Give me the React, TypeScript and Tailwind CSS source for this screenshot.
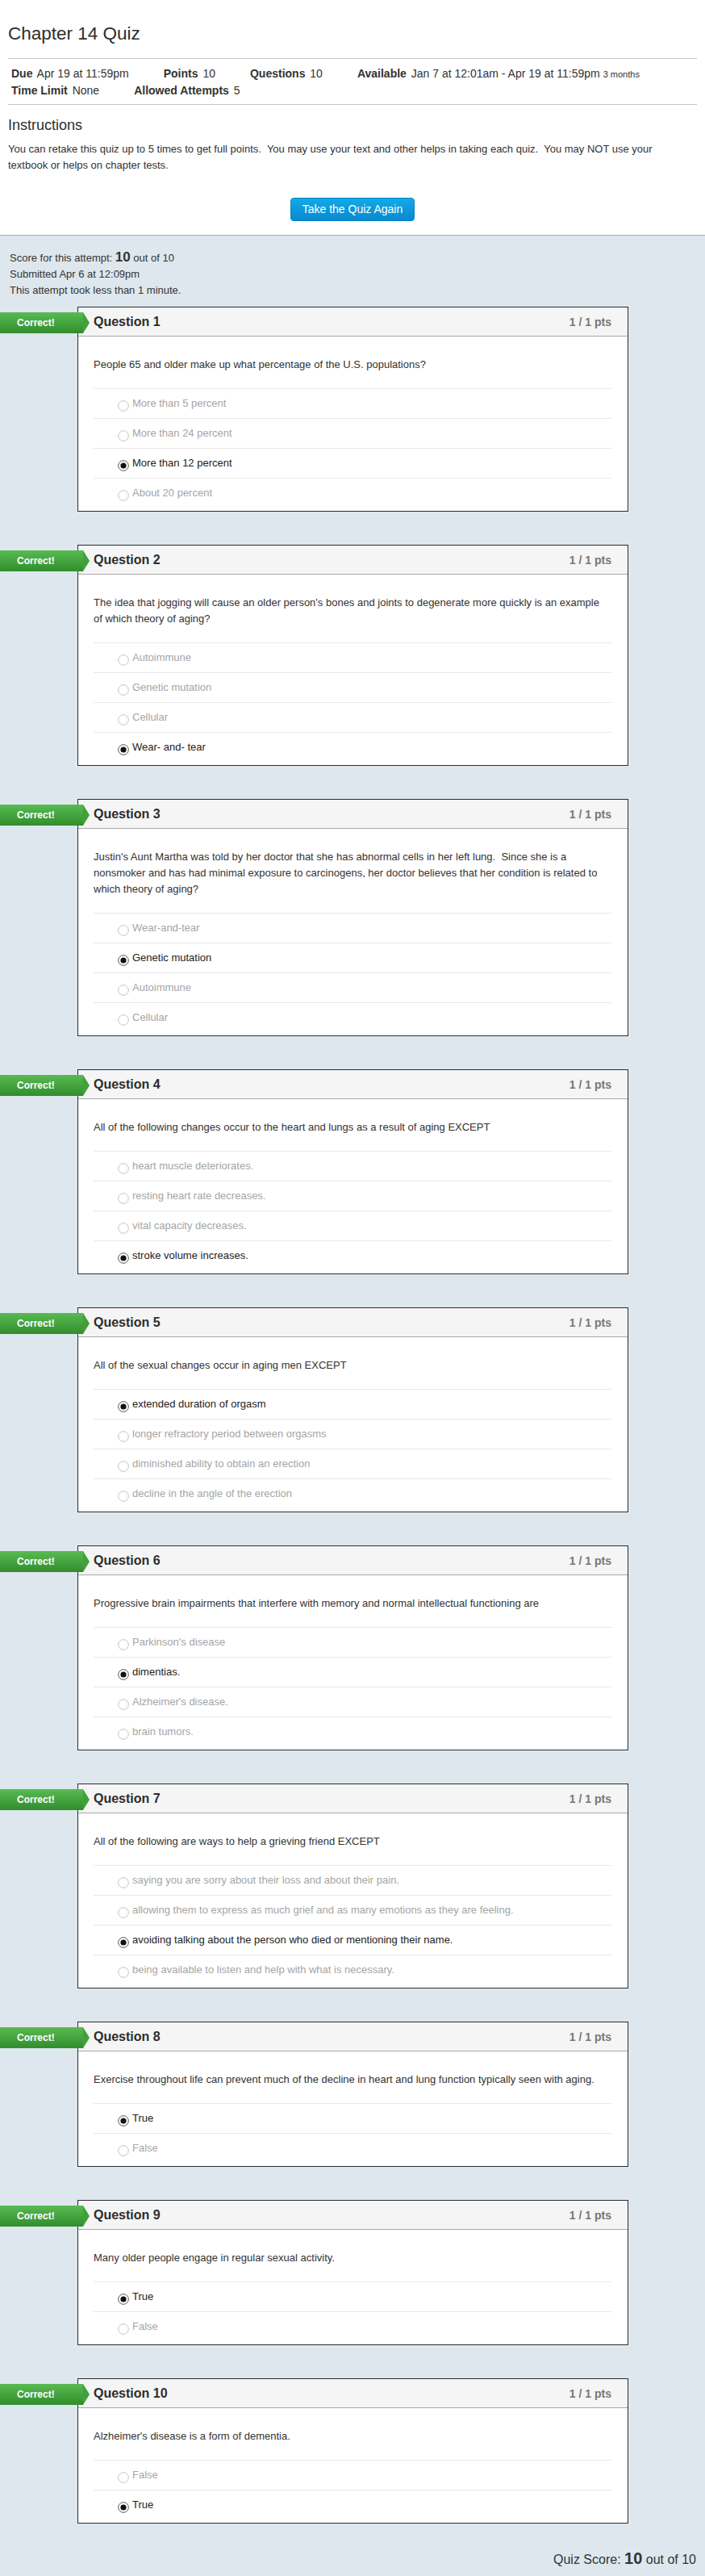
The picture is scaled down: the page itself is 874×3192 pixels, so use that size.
import React from "react"

type Question = {
  n: number
  text: string
  answers: string[]
  selected: number
}

const questions: Question[] = [
  {
    n: 1,
    text: "People 65 and older make up what percentage of the U.S. populations?",
    answers: ["More than 5 percent", "More than 24 percent", "More than 12 percent", "About 20 percent"],
    selected: 2,
  },
  {
    n: 2,
    text: "The idea that jogging will cause an older person's bones and joints to degenerate more quickly is an example of\u00a0which theory of aging?",
    answers: ["Autoimmune", "Genetic mutation", "Cellular", "Wear- and- tear"],
    selected: 3,
  },
  {
    n: 3,
    text: "Justin's Aunt Martha was told by her doctor that she has abnormal cells in her left lung.\u00a0 Since she is a nonsmoker and has had minimal exposure to carcinogens, her doctor believes that her condition is related to which theory of aging?",
    answers: ["Wear-and-tear", "Genetic mutation", "Autoimmune", "Cellular"],
    selected: 1,
  },
  {
    n: 4,
    text: "All of the following changes occur to the heart and lungs as a result of aging EXCEPT",
    answers: ["heart muscle deteriorates.", "resting heart rate decreases.", "vital capacity decreases.", "stroke volume increases."],
    selected: 3,
  },
  {
    n: 5,
    text: "All of the sexual changes occur in aging men EXCEPT",
    answers: [
      "extended duration of orgasm",
      "longer refractory period between orgasms",
      "diminished ability to obtain an erection",
      "decline in the angle of the erection",
    ],
    selected: 0,
  },
  {
    n: 6,
    text: "Progressive brain impairments that interfere with memory and normal intellectual functioning are",
    answers: ["Parkinson's disease", "dimentias.", "Alzheimer's disease.", "brain tumors."],
    selected: 1,
  },
  {
    n: 7,
    text: "All of the following are ways to help a grieving friend EXCEPT",
    answers: [
      "saying you are sorry about their loss and about their pain.",
      "allowing them to express as much grief and as many emotions as they are feeling.",
      "avoiding talking about the person who died or mentioning their name.",
      "being available to listen and help with what is necessary.",
    ],
    selected: 2,
  },
  {
    n: 8,
    text: "Exercise throughout life can prevent much of the decline in heart and lung function typically seen with aging.",
    answers: ["True", "False"],
    selected: 0,
  },
  {
    n: 9,
    text: "Many older people engage in regular sexual activity.",
    answers: ["True", "False"],
    selected: 0,
  },
  {
    n: 10,
    text: "Alzheimer's disease is a form of dementia.",
    answers: ["False", "True"],
    selected: 1,
  },
]

const Radio = ({ checked }: { checked: boolean }) => (
  <svg width="14" height="14" viewBox="0 0 14 14" className="shrink-0 mt-[5px]">
    <circle cx="7" cy="7" r="6.3" fill="#fff" stroke={checked ? "#555" : "#c4c4c4"} strokeWidth="1" />
    {checked && <circle cx="7" cy="7" r="3.6" fill="#111" />}
  </svg>
)

const QuestionCard = ({ q }: { q: Question }) => (
  <div className="relative ml-[96px] w-[683px] border border-[#2d2d2d] bg-white">
    {/* correct badge */}
    <div className="absolute left-[-97px] top-[6px] flex h-[26px] items-center">
      <div className="flex h-[26px] w-[103px] items-center bg-gradient-to-b from-[#58bb51] to-[#318d2d] pl-[21px] text-[12px] font-bold text-white">
        Correct!
      </div>
      <div className="h-0 w-0 border-y-[13px] border-l-[8px] border-y-transparent border-l-[#40a13b]" />
    </div>

    <div className="flex h-[36px] items-center justify-between border-b border-[#a8a8a8] bg-[#f5f5f5] pl-[19px] pr-[20px]">
      <span className="text-[16px] font-bold text-[#2d2d2d]">Question {q.n}</span>
      <span className="mt-[2px] text-[14px] font-bold text-[#777]">1 / 1 pts</span>
    </div>

    <div className="pl-[19px] pr-[20px] pt-[25px] pb-[4px]">
      <p className="text-[13px] leading-[20px] text-[#333]">{q.text}</p>
      <div className="mt-[19px]">
        {q.answers.map((a, i) => (
          <div key={i} className="flex h-[37px] items-center gap-[4px] border-t border-[#e8e8e8] pl-[30px]">
            <Radio checked={i === q.selected} />
            <span className={`text-[13px] ${i === q.selected ? "text-[#222]" : "text-[#a5a5a5]"}`}>{a}</span>
          </div>
        ))}
      </div>
    </div>
  </div>
)

export default function App() {
  return (
    <div className="min-h-[3192px] bg-[#dee7ee] font-['Liberation_Sans',Arial,sans-serif] text-[#333]">
      <div className="border-b border-[#aaaaaa] bg-white px-[10px] pt-[28px] pb-[17px]">
        <h1 className="text-[22.5px] leading-[28px] font-normal text-[#2d2d2d]">Chapter 14 Quiz</h1>

        <div className="mt-[16px] border-y border-[#c4c4c4] pl-[4px] pt-[8px] pb-[7px]">
          <div className="flex flex-wrap gap-x-[43px] text-[14px] leading-[20px]">
            <span>
              <b className="mr-[2px]">Due</b> Apr 19 at 11:59pm
            </span>
            <span>
              <b className="mr-[2px]">Points</b> 10
            </span>
            <span>
              <b className="mr-[2px]">Questions</b> 10
            </span>
            <span>
              <b className="mr-[2px]">Available</b> Jan 7 at 12:01am - Apr 19 at 11:59pm{" "}
              <span className="text-[11px]">3 months</span>
            </span>
            <span>
              <b className="mr-[2px]">Time Limit</b> None
            </span>
            <span>
              <b className="mr-[2px]">Allowed Attempts</b> 5
            </span>
          </div>
        </div>

        <h2 className="mt-[14px] text-[18px] leading-[22px] font-normal text-[#2d2d2d]">Instructions</h2>
        <p className="mt-[9px] pr-[20px] text-[13px] leading-[20px]">
          You can retake this quiz up to 5 times to get full points.{"\u00a0 "}You may use your text and other helps in taking each quiz.{"\u00a0 "}You may NOT use your textbook or helps on chapter tests.
        </p>

        <div className="mt-[30px] flex justify-center">
          <button className="h-[29px] w-[154px] rounded-[4px] border border-[#0a84c6] bg-gradient-to-b from-[#12aae8] to-[#0889cf] text-[14px] text-white">
            Take the Quiz Again
          </button>
        </div>
      </div>

      <div className="px-[12px] pt-[17px] text-[13px] leading-[20px]">
        <div>
          Score for this attempt: <b className="text-[17px] leading-[20px]">10</b> out of 10
        </div>
        <div>Submitted Apr 6 at 12:09pm</div>
        <div>This attempt took less than 1 minute.</div>
      </div>

      <div className="mt-[10px] flex flex-col gap-[41px]">
        {questions.map((q) => (
          <QuestionCard key={q.n} q={q} />
        ))}
      </div>

      <div className="mt-[31px] pr-[11px] text-right text-[16px] leading-[24px]">
        Quiz Score: <b className="text-[20px]">10</b> out of 10
      </div>
    </div>
  )
}
